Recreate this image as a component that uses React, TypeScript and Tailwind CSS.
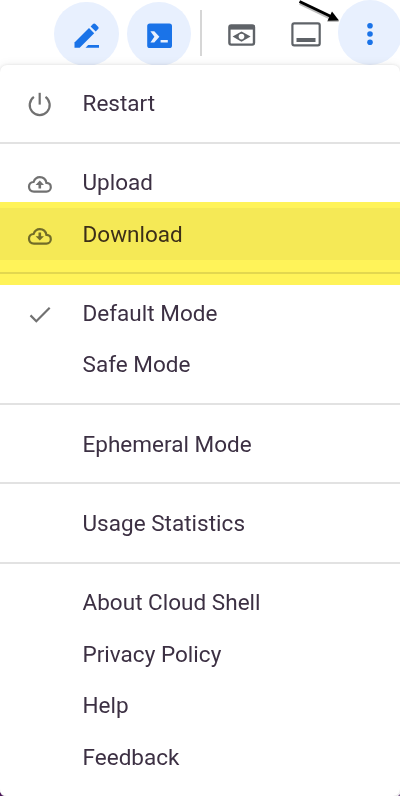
import React from "react";

const strokeProps = { fill: "none", stroke: "#717171", strokeWidth: 2.2 };

function EditIcon() {
  return (
    <svg width="26" height="26" viewBox="0 0 26 26" fill="#1a73e8">
      <path d="M0.5 24.7V19.4L15 4.9L20.2 10.2L5.7 24.7Z" />
      <path d="M16.6 3.4L19 1C19.7.3 20.7.3 21.4 1L24.1 3.7C24.8 4.4 24.8 5.3 24.1 6L21.7 8.5Z" />
      <path d="M14.2 22H25V24.7H11.5Z" />
    </svg>
  );
}

function TerminalIcon() {
  return (
    <svg width="26" height="26" viewBox="0 0 26 26">
      <rect x=".2" y=".4" width="24.8" height="24.6" rx="2.6" fill="#1a73e8" />
      <path d="M3.4 8.3H7.3L12.4 13.8L7.3 19.4H3.4L7.4 13.8Z" fill="#e8f0fe" />
      <rect x="13.6" y="17" width="7.2" height="2.5" fill="#e8f0fe" />
    </svg>
  );
}

function PreviewIcon() {
  return (
    <svg width="28" height="22" viewBox="0 0 28 22">
      <rect x="1.4" y="1.4" width="24.6" height="19.2" rx="1.8" fill="none" stroke="#5f6368" strokeWidth="2.4" />
      <rect x="1" y="1" width="25.4" height="4.6" fill="#5f6368" />
      <path d="M4.6 12.6L13.5 7.4L22.6 12.6L13.5 17.8Z" fill="#5f6368" />
      <circle cx="13.5" cy="12.6" r="2.8" fill="#fff" />
    </svg>
  );
}

function WindowIcon() {
  return (
    <svg width="30" height="25" viewBox="0 0 30 25">
      <rect x="1.4" y="1.4" width="27.3" height="22" rx="1.8" fill="none" stroke="#5f6368" strokeWidth="2.2" />
      <rect x="5.5" y="16" width="19" height="4" fill="#5f6368" />
    </svg>
  );
}

function PowerIcon() {
  return (
    <svg width="26" height="26" viewBox="0 0 26 26" {...strokeProps}>
      <path d="M12.7 1.8V13.6" />
      <path d="M6.9 5.9A10 10 0 1 0 18.5 5.9" />
    </svg>
  );
}

function CloudIcon({ down = false }: { down?: boolean }) {
  return (
    <svg width="26" height="26" viewBox="0 0 26 26" {...strokeProps}>
      <path d="M7 21.6C3.7 21.6 2 19.4 2 16.8C2 14.1 4 12.2 6.6 12C7.6 9.2 10 7.2 12.8 7.2C16.3 7.2 18.8 9.4 19.4 12.9C22.2 13 23.8 14.9 23.8 17.2C23.8 19.7 22 21.6 19.4 21.6Z" />
      <path
        d={down ? "M11.5 10.4H14.1V14.2H17L12.8 18.4L8.6 14.2H11.5Z" : "M11.5 18.6H14.1V15H17L12.8 10.6L8.6 15H11.5Z"}
        fill="#717171"
        stroke="none"
      />
    </svg>
  );
}

function CheckIcon() {
  return (
    <svg width="26" height="26" viewBox="0 0 26 26" {...strokeProps}>
      <path d="M3.5 14.4L9.3 20.2L22.7 6.8" />
    </svg>
  );
}

type Item = { label: string; icon?: React.ReactNode; active?: boolean };

const groups: Item[][] = [
  [{ label: "Restart", icon: <PowerIcon /> }],
  [
    { label: "Upload", icon: <CloudIcon /> },
    { label: "Download", icon: <CloudIcon down />, active: true },
  ],
  [{ label: "Default Mode", icon: <CheckIcon /> }, { label: "Safe Mode" }],
  [{ label: "Ephemeral Mode" }],
  [{ label: "Usage Statistics" }],
  [{ label: "About Cloud Shell" }, { label: "Privacy Policy" }, { label: "Help" }, { label: "Feedback" }],
];

export default function App() {
  return (
    <div className="relative h-[796px] w-[400px] overflow-hidden bg-white font-['Roboto',sans-serif]">
      <header className="flex h-[65px] items-center">
        <button className="mt-[3px] ml-[54px] flex size-[64.5px] shrink-0 items-center justify-center rounded-full bg-[#e8f0fe] pt-[3px] pl-px">
          <EditIcon />
        </button>
        <button className="mt-[3px] ml-2 flex size-[64.5px] shrink-0 items-center justify-center rounded-full bg-[#e8f0fe] pt-[3px] pl-[2px]">
          <TerminalIcon />
        </button>
        <div className="ml-[8.5px] h-[46px] w-[2px] shrink-0 bg-[#d6d6d6]" />
        <button className="ml-[26px] shrink-0 pt-1">
          <PreviewIcon />
        </button>
        <button className="ml-[35px] shrink-0 pt-[3px]">
          <WindowIcon />
        </button>
        <button className="ml-[17px] flex size-[64.5px] shrink-0 items-center justify-center rounded-full bg-[#e8f0fe] pt-[3px]">
          <svg width="6" height="24" viewBox="0 0 6 24" fill="#1a73e8">
            <circle cx="3" cy="3.8" r="2.8" />
            <circle cx="3" cy="12" r="2.8" />
            <circle cx="3" cy="20.2" r="2.8" />
          </svg>
        </button>
      </header>

      <nav className="relative h-[731px] rounded-[7px] bg-white pt-[12.3px] shadow-[0_0_3px_rgba(0,0,0,0.10),0_2px_12px_rgba(0,0,0,0.10)]">
        {groups.map((group, index) => (
          <div key={group[0].label}>
            {index > 0 && <hr className="my-[12.8px] h-[2px] border-0 bg-[#e2e2e2]" />}
            {group.map((item) => (
              <div
                key={item.label}
                className={
                  item.active
                    ? "flex h-[51.6px] items-center bg-[#f5f5f5] pl-[26.5px]"
                    : "flex h-[51.6px] items-center pl-[26.5px]"
                }
              >
                <span className="flex w-14 pt-0.5">{item.icon}</span>
                <span className="text-[22.5px] leading-none tracking-[0.02px] whitespace-nowrap text-[#3c3043]">
                  {item.label}
                </span>
              </div>
            ))}
          </div>
        ))}
      </nav>

      <div className="pointer-events-none absolute top-[202px] left-0 h-[82.5px] w-full bg-[#fff359] mix-blend-multiply" />
      <svg className="pointer-events-none absolute top-0 left-[296px]" width="48" height="30" viewBox="0 0 48 30">
        <g className="opacity-25">
          <path d="M4 3L35 18" stroke="#000" strokeWidth="4" />
          <path d="M43 22L31 22L36 13Z" />
        </g>
        <path d="M3.5 1.5L35 16.5" stroke="#000" strokeWidth="3" />
        <path d="M43 20.5L31.5 20.7L36 11.5Z" />
      </svg>
      <svg className="absolute bottom-0 left-0" width="4" height="4" viewBox="0 0 4 4" fill="#4a1658">
        <path d="M0 0Q1 3 4 4H0Z" />
      </svg>
      <svg className="absolute right-0 bottom-0" width="2" height="2" viewBox="0 0 2 2" fill="#79558a">
        <path d="M2 0V2H0Z" />
      </svg>
    </div>
  );
}
